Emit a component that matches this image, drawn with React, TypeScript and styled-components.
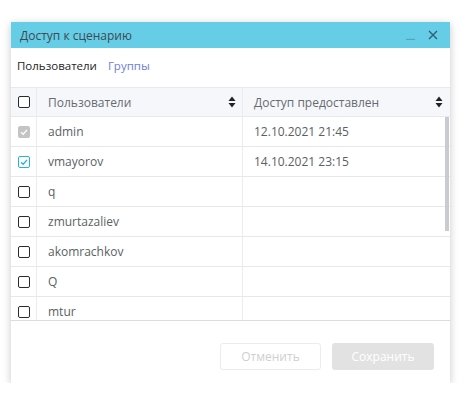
import React from "react";
import styled, { createGlobalStyle } from "styled-components";

const GlobalStyle = createGlobalStyle`
  html, body {
    margin: 0;
    padding: 0;
    background: #ffffff;
    font-family: "Open Sans", "Noto Sans", sans-serif;
  }
`;

type Row = { login: string; date?: string; state: "none" | "checked" | "locked" };

const rows: Row[] = [
  { login: "admin", date: "12.10.2021 21:45", state: "locked" },
  { login: "vmayorov", date: "14.10.2021 23:15", state: "checked" },
  { login: "q", state: "none" },
  { login: "zmurtazaliev", state: "none" },
  { login: "akomrachkov", state: "none" },
  { login: "Q", state: "none" },
  { login: "mtur", state: "none" },
];

const BODY_HEIGHT = 203;
const ROW_HEIGHT = 30;
const VISIBLE_SHARE = 0.56;

const SortIcon = () => (
  <svg width="8" height="12" viewBox="0 0 8 12">
    <path d="M4 0.5 L7.5 5 L0.5 5 Z" fill="#1f2326" />
    <path d="M4 11.5 L7.5 7 L0.5 7 Z" fill="#1f2326" />
  </svg>
);

const CheckMark = ({ color }: { color: string }) => (
  <svg width="8" height="8" viewBox="0 0 8 8">
    <path d="M1 4.2 L3.2 6.2 L7 1.8" fill="none" stroke={color} strokeWidth="1.3" />
  </svg>
);

const Check = ({ state }: { state: Row["state"] }) => (
  <Box $state={state}>
    {state === "locked" && <CheckMark color="#ffffff" />}
    {state === "checked" && <CheckMark color="#25b3d8" />}
  </Box>
);

const App = () => {
  const thumb = Math.round(BODY_HEIGHT * VISIBLE_SHARE);

  return (
    <>
      <GlobalStyle />
      <Dialog>
        <TitleBar>
          <Title>Доступ к сценарию</Title>
          <TitleActions>
            <svg width="9" height="9" viewBox="0 0 9 9">
              <path d="M0 8.5 H9" stroke="#56a3bb" strokeWidth="1.4" />
            </svg>
            <svg width="10" height="10" viewBox="0 0 10 10">
              <path d="M1 1 L9 9 M9 1 L1 9" stroke="#2f5f74" strokeWidth="1.4" />
            </svg>
          </TitleActions>
        </TitleBar>

        <Tabs>
          <Tab $active>Пользователи</Tab>
          <Tab>Группы</Tab>
        </Tabs>

        <Table>
          <HeadRow>
            <CheckCell>
              <Check state="none" />
            </CheckCell>
            <HeadCell>
              Пользователи
              <SortIcon />
            </HeadCell>
            <HeadCell $last>
              Доступ предоставлен
              <SortIcon />
            </HeadCell>
          </HeadRow>
          <BodyWrap>
            <Body>
              {rows.map((r) => (
                <BodyRow key={r.login}>
                  <CheckCell>
                    <Check state={r.state} />
                  </CheckCell>
                  <Cell>{r.login}</Cell>
                  <Cell $last>{r.date}</Cell>
                </BodyRow>
              ))}
            </Body>
            <ScrollThumb style={{ height: thumb }} />
          </BodyWrap>
        </Table>

        <Footer>
          <CancelButton disabled>Отменить</CancelButton>
          <SaveButton disabled>Сохранить</SaveButton>
        </Footer>
      </Dialog>
    </>
  );
};

const Dialog = styled.div`
  margin: 22px 0 0 11px;
  width: 439px;
  background: #ffffff;
  box-shadow: 0 2px 8px rgba(0, 0, 0, 0.22);
  display: flex;
  flex-direction: column;
`;

const TitleBar = styled.div`
  height: 26px;
  background: #66cde6;
  display: flex;
  align-items: center;
  justify-content: space-between;
  padding: 0 12px 0 9px;
`;

const Title = styled.div`
  font-size: 12px;
  color: #3c4a52;
`;

const TitleActions = styled.div`
  display: flex;
  align-items: center;
  gap: 13px;

  svg {
    display: block;
  }
`;

const Tabs = styled.div`
  display: flex;
  gap: 11px;
  padding: 10px 6px 0;
  height: 28px;
  box-sizing: border-box;
  margin-bottom: 11px;
`;

const Tab = styled.div<{ $active?: boolean }>`
  font-size: 11.5px;
  line-height: 16px;
  color: ${(p) => (p.$active ? "#1e1e1e" : "#6c7ed8")};
`;

const Table = styled.div`
  border-top: 1px solid #e6e9f0;
  border-bottom: 1px solid #dcdcdc;
`;

const columns = "26px 206px 1fr";

const HeadRow = styled.div`
  display: grid;
  grid-template-columns: ${columns};
  height: 28px;
  background: #f6f7fb;
  border-bottom: 1px solid #e6e9f0;
`;

const BodyWrap = styled.div`
  position: relative;
`;

const Body = styled.div`
  height: ${BODY_HEIGHT}px;
  overflow: hidden;
`;

const ScrollThumb = styled.div`
  position: absolute;
  top: 0;
  right: 1px;
  width: 4px;
  background: #c8cbd0;
`;

const BodyRow = styled.div`
  display: grid;
  grid-template-columns: ${columns};
  height: ${ROW_HEIGHT - 1}px;
  border-bottom: 1px solid #e8e8e8;
`;

const CheckCell = styled.div`
  display: flex;
  align-items: center;
  justify-content: center;
  border-right: 1px solid #ececec;
`;

const HeadCell = styled.div<{ $last?: boolean }>`
  display: flex;
  align-items: center;
  justify-content: space-between;
  padding: 0 ${(p) => (p.$last ? "7px" : "6px")} 0 11px;
  font-size: 12px;
  color: #666b70;
  border-right: ${(p) => (p.$last ? "none" : "1px solid #ececec")};
`;

const Cell = styled.div<{ $last?: boolean }>`
  display: flex;
  align-items: center;
  padding-left: 11px;
  font-size: 12px;
  color: #5a5f64;
  border-right: ${(p) => (p.$last ? "none" : "1px solid #ececec")};
`;

const Box = styled.div<{ $state: Row["state"] }>`
  width: 12px;
  height: 12px;
  box-sizing: border-box;
  border-radius: 2px;
  display: flex;
  align-items: center;
  justify-content: center;
  border: 1px solid
    ${(p) =>
      p.$state === "locked" ? "#c4c4c4" : p.$state === "checked" ? "#25b3d8" : "#2a2a2a"};
  background: ${(p) => (p.$state === "locked" ? "#c4c4c4" : "#ffffff")};

  svg {
    display: block;
  }
`;

const Footer = styled.div`
  display: flex;
  justify-content: flex-end;
  gap: 11px;
  padding: 22px 16px 13px;
`;

const ButtonBase = styled.button`
  height: 27px;
  border-radius: 3px;
  font-family: "Open Sans", "Noto Sans", sans-serif;
  font-size: 12px;
  cursor: default;
  padding: 0;
`;

const CancelButton = styled(ButtonBase)`
  width: 101px;
  background: #ffffff;
  border: 1px solid #ececec;
  color: #cfcfcf;
`;

const SaveButton = styled(ButtonBase)`
  width: 102px;
  background: #e2e2e2;
  border: none;
  color: #ffffff;
`;

export default App;
